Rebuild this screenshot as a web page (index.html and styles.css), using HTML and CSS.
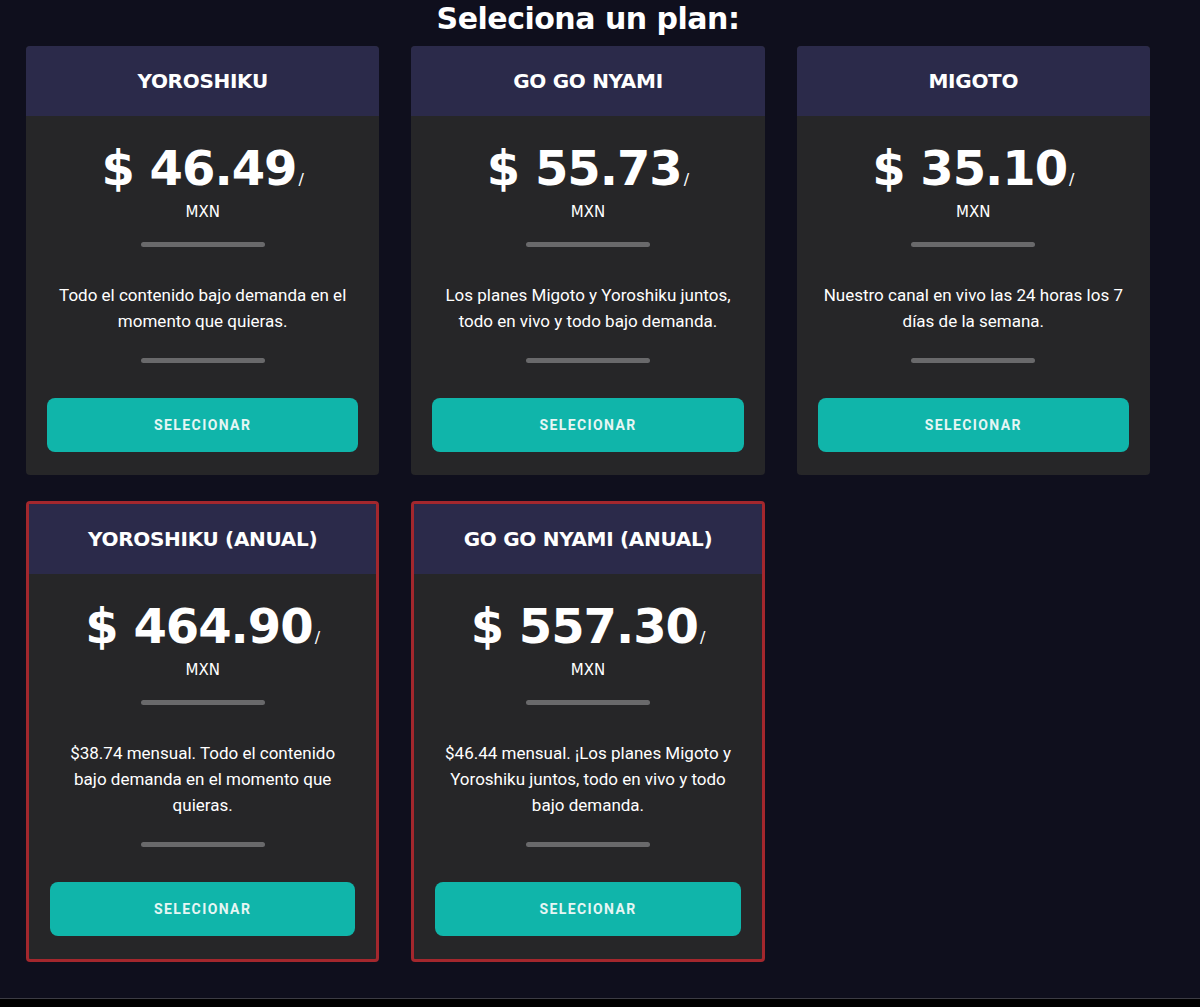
FILE: index.html
```html
<!DOCTYPE html>
<html lang="es">
<head>
<meta charset="utf-8">
<title>Selecciona un plan</title>
<link rel="stylesheet" href="styles.css">
</head>
<body>
<main class="page">
  <h1 class="title">Seleciona un plan:</h1>
  <div class="plans">
    <div class="card">
      <div class="card-head">YOROSHIKU</div>
      <div class="card-body">
        <div class="price">$ 46.49<span class="slash">/</span></div>
        <div class="currency">MXN</div>
        <div class="rule"></div>
        <p class="desc">Todo el contenido bajo demanda en el momento que quieras.</p>
        <div class="rule rule-low"></div>
        <button class="btn">SELECIONAR</button>
      </div>
    </div>
    <div class="card">
      <div class="card-head">GO GO NYAMI</div>
      <div class="card-body">
        <div class="price">$ 55.73<span class="slash">/</span></div>
        <div class="currency">MXN</div>
        <div class="rule"></div>
        <p class="desc">Los planes Migoto y Yoroshiku juntos, todo en vivo y todo bajo demanda.</p>
        <div class="rule rule-low"></div>
        <button class="btn">SELECIONAR</button>
      </div>
    </div>
    <div class="card">
      <div class="card-head">MIGOTO</div>
      <div class="card-body">
        <div class="price">$ 35.10<span class="slash">/</span></div>
        <div class="currency">MXN</div>
        <div class="rule"></div>
        <p class="desc">Nuestro canal en vivo las 24 horas los 7 días de la semana.</p>
        <div class="rule rule-low"></div>
        <button class="btn">SELECIONAR</button>
      </div>
    </div>
    <div class="card card-annual">
      <div class="card-head">YOROSHIKU (ANUAL)</div>
      <div class="card-body">
        <div class="price">$ 464.90<span class="slash">/</span></div>
        <div class="currency">MXN</div>
        <div class="rule"></div>
        <p class="desc">$38.74 mensual. Todo el contenido bajo demanda en el momento que quieras.</p>
        <div class="rule rule-low"></div>
        <button class="btn">SELECIONAR</button>
      </div>
    </div>
    <div class="card card-annual">
      <div class="card-head">GO GO NYAMI (ANUAL)</div>
      <div class="card-body">
        <div class="price">$ 557.30<span class="slash">/</span></div>
        <div class="currency">MXN</div>
        <div class="rule"></div>
        <p class="desc">$46.44 mensual. ¡Los planes Migoto y Yoroshiku juntos, todo en vivo y todo bajo demanda.</p>
        <div class="rule rule-low"></div>
        <button class="btn">SELECIONAR</button>
      </div>
    </div>
  </div>
</main>
<footer class="footer"></footer>
</body>
</html>
```
FILE: styles.css
```css
html, body {
  margin: 0;
  padding: 0;
  background: #0f0f1d;
}
body {
  font-family: Roboto, "Liberation Sans", sans-serif;
  color: #ffffff;
  min-height: 1007px;
  display: flex;
  flex-direction: column;
}
.page {
  width: 1124px;
  margin-left: 26px;
  flex: 0 0 auto;
  height: 998px;
}
.title {
  margin: 0;
  height: 46px;
  text-align: center;
  font-family: "DejaVu Sans", sans-serif;
  font-weight: 700;
  font-size: 30px;
  line-height: 38px;
  letter-spacing: -0.5px;
  color: #ffffff;
}
.plans {
  display: grid;
  grid-template-columns: repeat(3, 1fr);
  column-gap: 32px;
  row-gap: 26px;
}
.card {
  background: #262628;
  border-radius: 4px;
  overflow: hidden;
  display: flex;
  flex-direction: column;
}
.card-annual {
  border: 3px solid #a3272d;
}
.card-head {
  height: 70px;
  background: #2b2a4a;
  display: flex;
  align-items: center;
  justify-content: center;
  font-family: "DejaVu Sans", sans-serif;
  font-weight: 700;
  font-size: 20px;
  letter-spacing: -0.3px;
}
.card-body {
  flex: 1 1 auto;
  padding: 22px 21px 23px;
  display: flex;
  flex-direction: column;
  align-items: center;
  text-align: center;
}
.price {
  font-family: "DejaVu Sans", sans-serif;
  font-weight: 700;
  font-size: 48px;
  line-height: 60px;
  letter-spacing: -1px;
}
.slash {
  font-size: 16px;
  font-weight: 400;
  line-height: 0;
  letter-spacing: 0;
  margin-left: 2px;
}
.currency {
  font-family: "DejaVu Sans", sans-serif;
  font-size: 15px;
  font-weight: 500;
  line-height: 20px;
  margin-top: 4px;
}
.rule {
  width: 124px;
  height: 5px;
  border-radius: 3px;
  background: #69696b;
  margin-top: 20px;
}
.desc {
  margin: 35px 0 0;
  padding: 0 6px;
  font-size: 17px;
  line-height: 26px;
  color: #ffffff;
}
.rule-low {
  margin-top: 24px;
}
.btn {
  margin-top: 35px;
  width: 100%;
  height: 54px;
  border: none;
  border-radius: 8px;
  background: #10b5aa;
  color: #e6f6f4;
  font-family: Roboto, "Liberation Sans", sans-serif;
  font-weight: 700;
  font-size: 14px;
  letter-spacing: 1.4px;
  cursor: pointer;
}
.footer {
  flex: 1 0 auto;
  background: #000000;
  border-top: 1px solid #3c3c44;
}
```
